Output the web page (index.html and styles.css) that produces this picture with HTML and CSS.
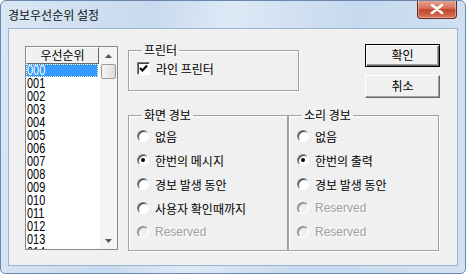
FILE: index.html
```html
<!DOCTYPE html>
<html>
<head>
<meta charset="utf-8">
<link rel="stylesheet" href="styles.css">
</head>
<body>

<div class="window">
  <div class="titlebar">
    <span class="title">경보우선순위 설정</span>
    <div class="close">
      <svg width="14" height="10" viewBox="0 0 14 10"><path d="M2 1 L12 9 M12 1 L2 9" stroke="#fff" stroke-width="2.6" stroke-linecap="round"/></svg>
    </div>
  </div>

  <div class="client">
    <div class="listbox">
      <div class="list-main">
        <div class="list-head"><span class="head-cell">우선순위</span></div>
        <div class="rows">
          <div class="row selected"><span>000</span></div>
          <div class="row"><span>001</span></div>
          <div class="row"><span>002</span></div>
          <div class="row"><span>003</span></div>
          <div class="row"><span>004</span></div>
          <div class="row"><span>005</span></div>
          <div class="row"><span>006</span></div>
          <div class="row"><span>007</span></div>
          <div class="row"><span>008</span></div>
          <div class="row"><span>009</span></div>
          <div class="row"><span>010</span></div>
          <div class="row"><span>011</span></div>
          <div class="row"><span>012</span></div>
          <div class="row"><span>013</span></div>
          <div class="row"><span>014</span></div>
        </div>
      </div>
      <div class="scrollbar">
        <div class="sb-btn"><svg width="7" height="4" viewBox="0 0 7 4"><path d="M0 4 L3.5 0 L7 4 Z" fill="#555"/></svg></div>
        <div class="sb-thumb"></div>
        <div class="sb-track"></div>
        <div class="sb-btn"><svg width="7" height="4" viewBox="0 0 7 4"><path d="M0 0 L3.5 4 L7 0 Z" fill="#555"/></svg></div>
      </div>
    </div>

    <div class="main">
      <div class="top">
        <fieldset class="group printer">
          <legend>프린터</legend>
          <div class="item"><span class="check"><svg width="9" height="9" viewBox="0 0 9 9"><path d="M1 4 L3.5 6.5 L8 1.5" stroke="#000" stroke-width="2" fill="none"/></svg></span>라인 프린터</div>
        </fieldset>
        <div class="buttons">
          <div class="btn default">확인</div>
          <div class="btn">취소</div>
        </div>
      </div>

      <div class="bottom">
        <fieldset class="group screen">
          <legend>화면 경보</legend>
          <div class="item"><span class="radio"></span>없음</div>
          <div class="item"><span class="radio on"></span>한번의 메시지</div>
          <div class="item"><span class="radio"></span>경보 발생 동안</div>
          <div class="item"><span class="radio"></span>사용자 확인때까지</div>
          <div class="item disabled"><span class="radio"></span>Reserved</div>
        </fieldset>
        <fieldset class="group sound">
          <legend>소리 경보</legend>
          <div class="item"><span class="radio"></span>없음</div>
          <div class="item"><span class="radio on"></span>한번의 출력</div>
          <div class="item"><span class="radio"></span>경보 발생 동안</div>
          <div class="item disabled"><span class="radio"></span>Reserved</div>
          <div class="item disabled"><span class="radio"></span>Reserved</div>
        </fieldset>
      </div>
    </div>
  </div>
</div>

</body>
</html>
```

FILE: styles.css
```css
body {
  margin: 0;
  background: #fff;
  font-family: "Noto Sans CJK KR", "Liberation Sans", sans-serif;
  font-size: 12px;
  color: #000;
}

.window {
  width: 466px;
  height: 274px;
  box-sizing: border-box;
  border: 1px solid #6a87ac;
  border-radius: 6px 6px 5px 5px;
  background: linear-gradient(100deg, #dae7f5 0%, #c8daef 30%, #dde9f6 45%, #c6d9ee 70%, #d3e2f3 100%);
  padding: 0 7px 7px 7px;
  display: flex;
  flex-direction: column;
  overflow: hidden;
}

.titlebar {
  height: 27px;
  display: flex;
  align-items: flex-start;
  justify-content: space-between;
}

.title {
  margin-top: 6px;
  line-height: 16px;
  color: #111;
}

.close {
  width: 40px;
  height: 19px;
  margin-right: 1px;
  margin-top: -1px;
  box-sizing: border-box;
  border: 1px solid #6b2a1e;
  border-top: none;
  border-radius: 0 0 4px 4px;
  background: linear-gradient(#e9a898 0%, #d7735c 45%, #c3422a 55%, #d5775e 100%);
  box-shadow: inset 0 0 0 1px rgba(255,255,255,0.35);
  display: flex;
  align-items: center;
  justify-content: center;
}

.client {
  flex: 1;
  background: #f0f0f0;
  border: 1px solid #9db3cf;
  display: flex;
  padding: 14px 0 0 16px;
}

/* list box */
.listbox {
  margin-top: 3px;
  width: 93px;
  height: 204px;
  box-sizing: border-box;
  border: 1px solid #828790;
  background: #fff;
  display: flex;
  overflow: hidden;
}

.list-main {
  flex: 1;
  display: flex;
  flex-direction: column;
  overflow: hidden;
}

.list-head {
  height: 17px;
  flex: none;
  background: #f0f0f0;
  display: flex;
}

.head-cell {
  width: 73px;
  box-sizing: border-box;
  border: 1px solid;
  border-color: #fff #696969 #696969 #fff;
  text-align: center;
  line-height: 14px;
  font-size: 12px;
}

.rows {
  font-family: "Liberation Sans Narrow", "Liberation Sans", sans-serif;
  font-size: 14px;
}

.row {
  height: 13px;
  line-height: 13px;
  padding-left: 1px;
  width: 72px;
  box-sizing: border-box;
}

.row span {
  display: inline-block;
  transform: scaleX(0.78);
  transform-origin: left center;
}

.row.selected {
  background: #3399ff;
  color: #fff;
  outline: 1px dotted #ffd;
  outline-offset: -1px;
}

.scrollbar {
  width: 17px;
  flex: none;
  background: #f4f4f4;
  display: flex;
  flex-direction: column;
}

.sb-btn {
  height: 17px;
  display: flex;
  align-items: center;
  justify-content: center;
}

.sb-thumb {
  height: 15px;
  margin: 0 1px;
  box-sizing: border-box;
  border: 1px solid #9a9a9a;
  border-radius: 2px;
  background: linear-gradient(90deg, #f6f6f6, #dcdcdc);
}

.sb-track {
  flex: 1;
}

/* right side */
.main {
  margin-left: 10px;
  width: 312px;
  display: flex;
  flex-direction: column;
}

.top {
  height: 65px;
  display: flex;
  justify-content: space-between;
}

.group {
  margin: 0;
  padding: 0 0 0 8px;
  border: 1px solid #a0a0a0;
  box-shadow: inset 1px 1px #fff, 1px 1px #fff;
  box-sizing: border-box;
  min-width: 0;
}

.group legend {
  padding: 0 2px;
  margin-left: 5px;
  line-height: 14px;
  font-size: 12px;
}

.printer {
  width: 171px;
  height: 48px;
  padding-top: 3px;
}

.buttons {
  margin-top: 1px;
  display: flex;
  flex-direction: column;
  gap: 8px;
}

.btn {
  width: 75px;
  height: 23px;
  box-sizing: border-box;
  border: 1px solid;
  border-color: #fff #696969 #696969 #fff;
  box-shadow: inset -1px -1px #a0a0a0;
  text-align: center;
  line-height: 20px;
  font-size: 12px;
}

.btn.default {
  border-color: #000;
  box-shadow: inset 1px 1px #fff, inset -1px -1px #696969, inset -2px -2px #a0a0a0;
}

.bottom {
  display: flex;
}

.screen {
  width: 160px;
  height: 143px;
  padding-top: 2px;
}

.sound {
  width: 151px;
  height: 143px;
  padding-top: 2px;
}

.item {
  height: 24px;
  display: flex;
  align-items: center;
  gap: 6px;
  white-space: nowrap;
}

.printer .item {
  height: 16px;
}

.item.disabled {
  color: #a0a0a0;
  text-shadow: 1px 1px #fff;
  font-family: "Liberation Sans", sans-serif;
}

.radio {
  width: 12px;
  height: 12px;
  box-sizing: border-box;
  border-radius: 50%;
  border: 1px solid;
  border-color: #808080 #fff #fff #808080;
  background: #fff;
  box-shadow: inset 1px 1px #404040;
  display: flex;
  align-items: center;
  justify-content: center;
  flex: none;
}

.radio.on::after {
  content: "";
  width: 4px;
  height: 4px;
  border-radius: 50%;
  background: #000;
}

.disabled .radio {
  background: #f0f0f0;
  box-shadow: inset 1px 1px #a0a0a0;
}

.check {
  width: 13px;
  height: 13px;
  box-sizing: border-box;
  border: 1px solid;
  border-color: #808080 #fff #fff #808080;
  box-shadow: inset 1px 1px #404040;
  background: #fff;
  display: flex;
  align-items: center;
  justify-content: center;
  flex: none;
}
```
